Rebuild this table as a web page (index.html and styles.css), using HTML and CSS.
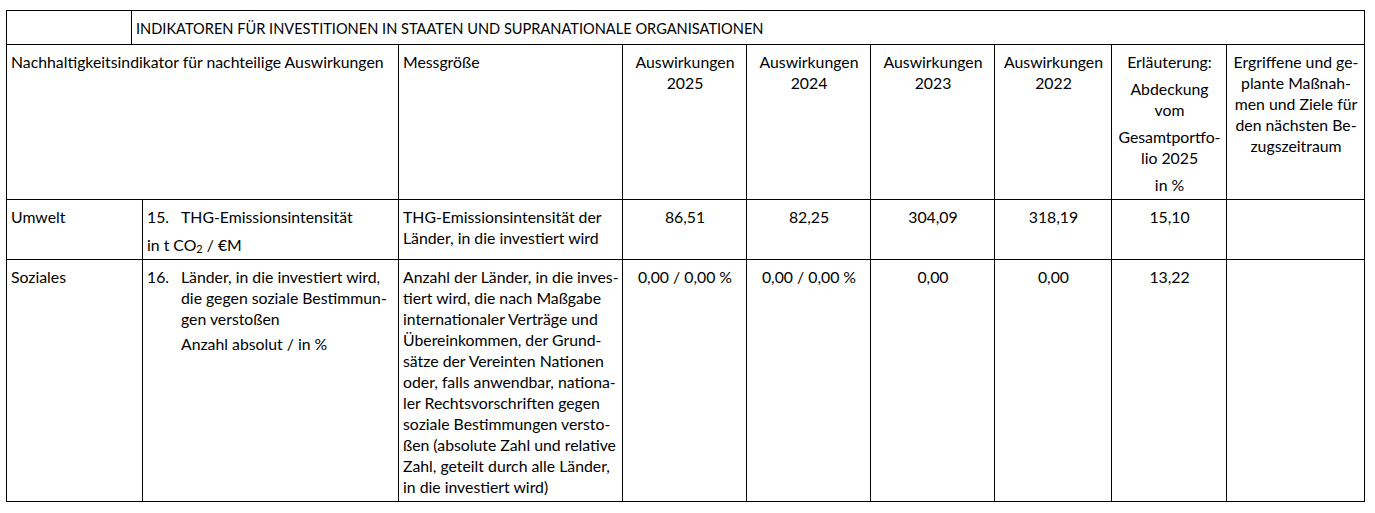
FILE: index.html
```html
<!DOCTYPE html>
<html lang="de">
<head>
<meta charset="utf-8">
<title>Indikatoren für Investitionen in Staaten und supranationale Organisationen</title>
<link rel="stylesheet" href="styles.css">
</head>
<body>
<table class="pai">
  <colgroup>
    <col class="c1a"><col class="c1b"><col class="c2"><col class="c3">
    <col class="c4"><col class="c5"><col class="c6"><col class="c7">
    <col class="c8"><col class="c9">
  </colgroup>
  <tr class="r-title">
    <td></td>
    <td colspan="9" class="title">INDIKATOREN FÜR INVESTITIONEN IN STAATEN UND SUPRANATIONALE ORGANISATIONEN</td>
  </tr>
  <tr class="r-head">
    <td colspan="3">Nachhaltigkeitsindikator für nachteilige Auswirkungen</td>
    <td>Messgröße</td>
    <td class="ctr">Auswirkungen<br>2025</td>
    <td class="ctr">Auswirkungen<br>2024</td>
    <td class="ctr">Auswirkungen<br>2023</td>
    <td class="ctr">Auswirkungen<br>2022</td>
    <td class="ctr">
      <p>Erläuterung:</p>
      <p class="sp">Abdeckung<br>vom</p>
      <p class="sp">Gesamtportfo-<br>lio 2025</p>
      <p class="sp">in %</p>
    </td>
    <td class="ctr">Ergriffene und ge-<br>plante Maßnah-<br>men und Ziele für<br>den nächsten Be-<br>zugszeitraum</td>
  </tr>
  <tr class="r-env">
    <td colspan="2">Umwelt</td>
    <td>
      <div class="item"><span class="num">15.</span><span class="txt">THG-Emissionsintensität</span></div>
      <p class="unit">in t CO<sub>2</sub> / €M</p>
    </td>
    <td>THG-Emissionsintensität der<br>Länder, in die investiert wird</td>
    <td class="ctr">86,51</td>
    <td class="ctr">82,25</td>
    <td class="ctr">304,09</td>
    <td class="ctr">318,19</td>
    <td class="ctr">15,10</td>
    <td></td>
  </tr>
  <tr class="r-soc">
    <td colspan="2">Soziales</td>
    <td>
      <div class="item"><span class="num">16.</span><span class="txt">Länder, in die investiert wird,<br>die gegen soziale Bestimmun-<br>gen verstoßen</span></div>
      <div class="item sub"><span class="num"></span><span class="txt">Anzahl absolut / in %</span></div>
    </td>
    <td>Anzahl der Länder, in die inves-<br>tiert wird, die nach Maßgabe<br>internationaler Verträge und<br>Übereinkommen, der Grund-<br>sätze der Vereinten Nationen<br>oder, falls anwendbar, nationa-<br>ler Rechtsvorschriften gegen<br>soziale Bestimmungen versto-<br>ßen (absolute Zahl und relative<br>Zahl, geteilt durch alle Länder,<br>in die investiert wird)</td>
    <td class="ctr">0,00 / 0,00 %</td>
    <td class="ctr">0,00 / 0,00 %</td>
    <td class="ctr">0,00</td>
    <td class="ctr">0,00</td>
    <td class="ctr">13,22</td>
    <td></td>
  </tr>
</table>
</body>
</html>
```
FILE: styles.css
```css
html, body {
  margin: 0;
  padding: 0;
  background: #fff;
}
body {
  font-family: Lato, "Open Sans", sans-serif;
  font-size: 15.8px;
  line-height: 21px;
  color: #000;
}
.pai {
  margin: 10px 0 0 6px;
  border-collapse: collapse;
  table-layout: fixed;
  width: 1359px;
}
.c1a { width: 125px; }
.c1b { width: 11px; }
.c2 { width: 256px; }
.c3 { width: 224px; }
.c4, .c5, .c6 { width: 124px; }
.c7 { width: 117px; }
.c8 { width: 115px; }
.c9 { width: 138px; }
.pai td {
  border: 1px solid #000;
  vertical-align: top;
  padding: 6px 3px 4px 4px;
  overflow: hidden;
  white-space: nowrap;
}
.r-title { height: 34px; }
.r-title td { padding-top: 7px; }
.r-head { height: 155px; }
.r-env { height: 60px; }
.r-soc { height: 242px; }
.title {
  padding-left: 3px;
  font-size: 14.6px;
}
.ctr { text-align: center; }
p { margin: 0; }
p.sp { margin-top: 6px; }
.item {
  display: flex;
}
.item .num {
  flex: 0 0 34px;
}
.item .txt {
  flex: 1 1 auto;
}
.item.sub { margin-top: 4px; }
.unit { margin-top: 7px; }
sub {
  font-size: 11px;
  line-height: 0;
  vertical-align: -2px;
}
```
